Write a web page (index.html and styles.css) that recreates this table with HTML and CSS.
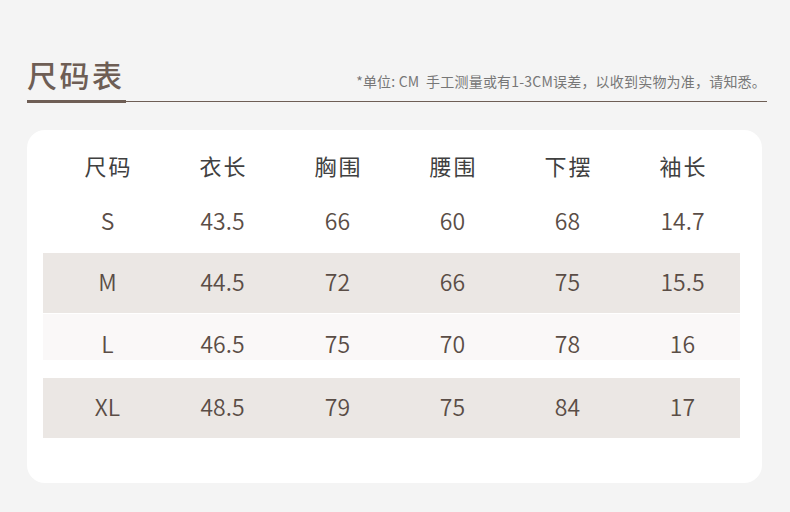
FILE: index.html
```html
<!DOCTYPE html>
<html lang="zh">
<head>
<meta charset="utf-8">
<link rel="stylesheet" href="styles.css">
</head>
<body>
<div class="page">
  <div class="head">
    <h1 class="title">尺码表</h1>
    <p class="note">*单位: CM&nbsp; 手工测量或有1-3CM误差，以收到实物为准，请知悉。</p>
  </div>
  <div class="card">
    <div class="row th">
      <span>尺码</span><span>衣长</span><span>胸围</span><span>腰围</span><span>下摆</span><span>袖长</span>
    </div>
    <div class="row r-s">
      <span>S</span><span>43.5</span><span>66</span><span>60</span><span>68</span><span>14.7</span>
    </div>
    <div class="row r-m shade">
      <span>M</span><span>44.5</span><span>72</span><span>66</span><span>75</span><span>15.5</span>
    </div>
    <div class="row r-l light">
      <span>L</span><span>46.5</span><span>75</span><span>70</span><span>78</span><span>16</span>
    </div>
    <div class="row r-xl shade">
      <span>XL</span><span>48.5</span><span>79</span><span>75</span><span>84</span><span>17</span>
    </div>
  </div>
</div>
</body>
</html>
```
FILE: styles.css
```css
* { box-sizing: border-box; }
html, body { margin: 0; padding: 0; }
body {
  background: #f4f4f4;
  font-family: "Noto Sans CJK SC", "Noto Sans", sans-serif;
  width: 790px;
  height: 512px;
  overflow: hidden;
}
.page { padding: 0 23px 0 27px; }
.head {
  display: flex;
  justify-content: space-between;
  align-items: flex-end;
  padding-top: 52px;
  border-bottom: 1px solid #6e5e55;
}
.title {
  margin: 0 0 -2px 0;
  font-size: 30px;
  font-weight: 500;
  line-height: 44px;
  letter-spacing: 2.5px;
  color: #6e5e55;
  width: 99px;
  padding-bottom: 4px;
  border-bottom: 3px solid #6e5e55;
}
.note {
  margin: 0 1px 11px 0;
  font-size: 14px;
  line-height: 18px;
  letter-spacing: 0.2px;
  color: #777;
}
.card {
  margin-top: 28px;
  width: 735px;
  height: 353px;
  background: #fff;
  border-radius: 18px;
  padding: 10px 22px 0 16px;
}
.row {
  display: grid;
  grid-template-columns: repeat(6, 115px);
  padding-left: 7px;
  padding-bottom: 4px;
  align-items: center;
  text-align: center;
  font-size: 23px;
  font-weight: 350;
  color: #5a4d46;
  height: 60px;
}
.th {
  height: 54px;
  font-size: 22px;
  font-weight: 400;
  letter-spacing: 2px;
  color: #404040;
}
.th span { padding-left: 2px; }
.r-s { height: 59px; padding-bottom: 7px; }
.r-m { height: 60px; }
.r-l { height: 62px; margin-top: 1px; }
.r-xl { height: 60px; margin-top: 2px; }
.shade { background: #ebe7e4; }
.light { background: linear-gradient(#faf8f8 0, #faf8f8 46px, #fff 46px); }
```
